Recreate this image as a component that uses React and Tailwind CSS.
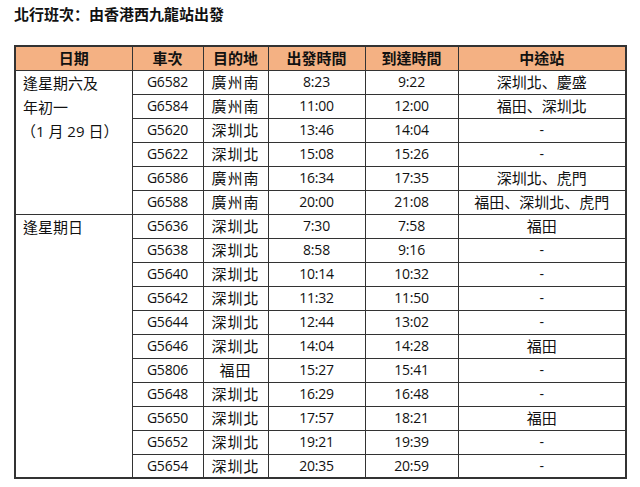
const sat = [
  ["G6582", "廣州南", "8:23", "9:22", "深圳北、慶盛"],
  ["G6584", "廣州南", "11:00", "12:00", "福田、深圳北"],
  ["G5620", "深圳北", "13:46", "14:04", "-"],
  ["G5622", "深圳北", "15:08", "15:26", "-"],
  ["G6586", "廣州南", "16:34", "17:35", "深圳北、虎門"],
  ["G6588", "廣州南", "20:00", "21:08", "福田、深圳北、虎門"],
];

const sun = [
  ["G5636", "深圳北", "7:30", "7:58", "福田"],
  ["G5638", "深圳北", "8:58", "9:16", "-"],
  ["G5640", "深圳北", "10:14", "10:32", "-"],
  ["G5642", "深圳北", "11:32", "11:50", "-"],
  ["G5644", "深圳北", "12:44", "13:02", "-"],
  ["G5646", "深圳北", "14:04", "14:28", "福田"],
  ["G5806", "福田", "15:27", "15:41", "-"],
  ["G5648", "深圳北", "16:29", "16:48", "-"],
  ["G5650", "深圳北", "17:57", "18:21", "福田"],
  ["G5652", "深圳北", "19:21", "19:39", "-"],
  ["G5654", "深圳北", "20:35", "20:59", "-"],
];

const cell = "border border-[#333] h-[24px] p-0 text-center align-middle leading-[22px]";
const num = "text-[14px] tracking-[-0.2px]";
const cjk = "text-[15px]";

// SC punctuation sits at the left of its em box, like the source document
function Punct({ c }) {
  return (
    <span className="inline-block w-[1em] text-left font-['Noto_Sans_CJK_SC',sans-serif]">
      {c}
    </span>
  );
}

function Stops({ text }) {
  const parts = text.split("、");
  return parts.map((p, i) => (
    <span key={i}>
      {p}
      {i < parts.length - 1 && <Punct c="、" />}
    </span>
  ));
}

function Rows({ label, rows }) {
  return rows.map((r, i) => (
    <tr key={r[0]}>
      {i === 0 && (
        <td
          rowSpan={rows.length}
          className="border border-[#333] p-0 pl-[7px] align-top text-left text-[15px] leading-[24px]"
        >
          {label}
        </td>
      )}
      <td className={`${cell} ${num}`}>{r[0]}</td>
      <td className={`${cell} ${cjk} tracking-[1px]`}>{r[1]}</td>
      <td className={`${cell} ${num}`}>{r[2]}</td>
      <td className={`${cell} ${num}`}>{r[3]}</td>
      <td className={`${cell} ${r[4] === "-" ? num : cjk}`}>
        <Stops text={r[4]} />
      </td>
    </tr>
  ));
}

export default function App() {
  return (
    <div
      className="w-[640px] h-[487px] bg-white text-[#111] overflow-hidden"
      style={{ fontFamily: "'Open Sans','Noto Sans CJK TC',sans-serif" }}
    >
      <div className="pl-[14px] pt-[1px] h-[28px] leading-[26px] text-[15px] font-bold">
        北行班次<Punct c="：" />由香港西九龍站出發
      </div>
      <table className="mt-[17px] ml-[14px] w-[611px] border-collapse border-2 border-[#333] table-fixed">
        <colgroup>
          <col className="w-[117px]" />
          <col className="w-[71px]" />
          <col className="w-[65px]" />
          <col className="w-[97px]" />
          <col className="w-[93px]" />
          <col className="w-[168px]" />
        </colgroup>
        <thead>
          <tr className="bg-[#f4b183]">
            {["日期", "車次", "目的地", "出發時間", "到達時間", "中途站"].map((h) => (
              <th key={h} className={`${cell} text-[15px] font-bold`}>
                {h}
              </th>
            ))}
          </tr>
        </thead>
        <tbody>
          <Rows
            label={
              <>
                逢星期六及
                <br />
                年初一
                <br />
                <span className="-ml-[2px]">（1 月 29 日）</span>
              </>
            }
            rows={sat}
          />
          <Rows label="逢星期日" rows={sun} />
        </tbody>
      </table>
    </div>
  );
}
